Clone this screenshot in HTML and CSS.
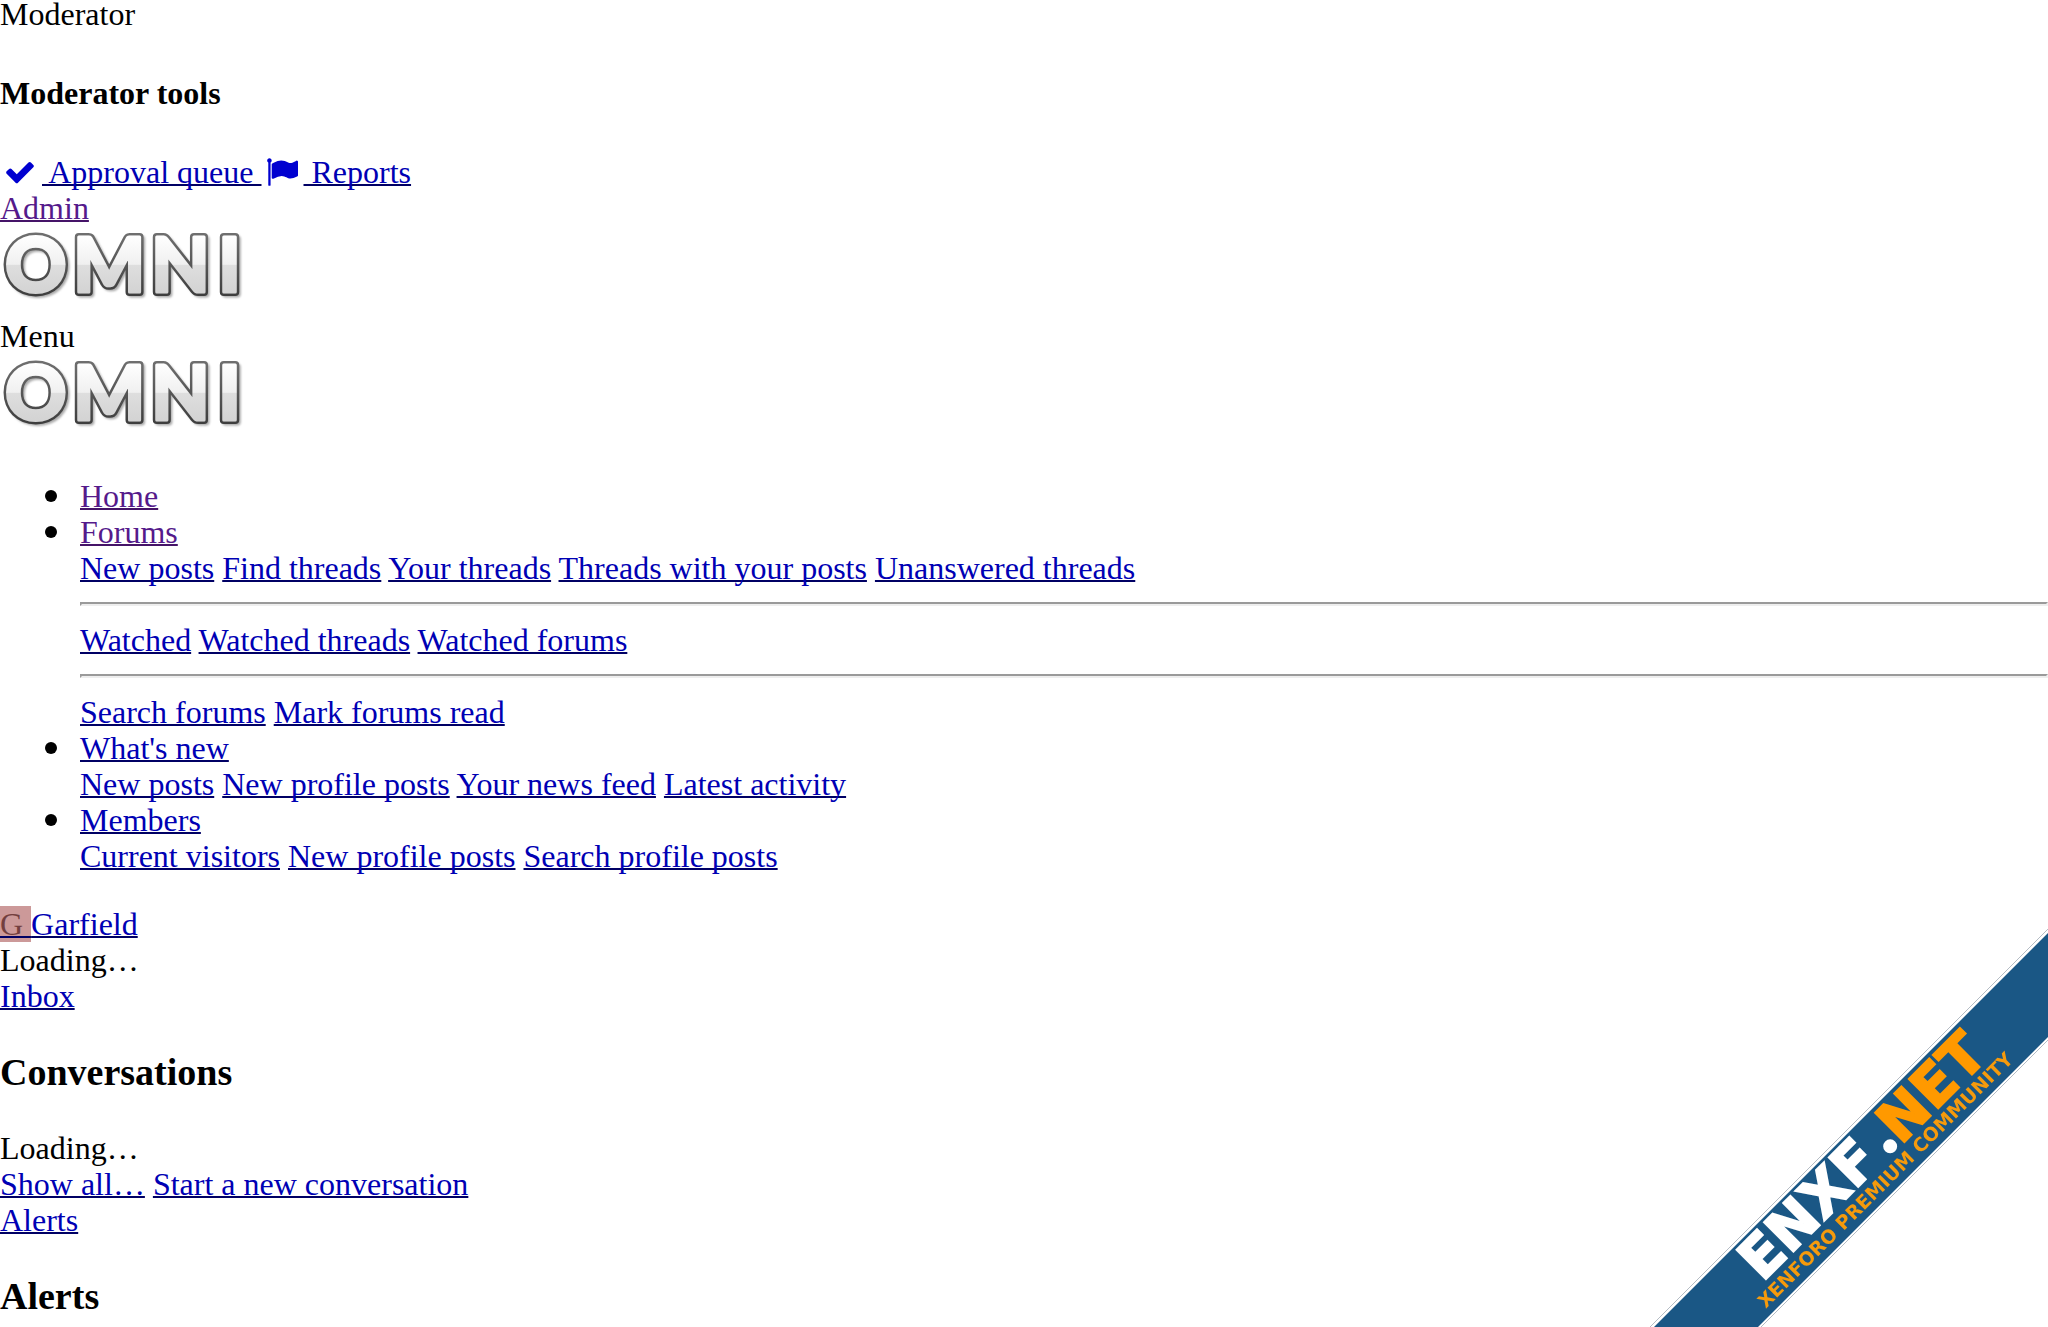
FILE: index.html
```html
<!DOCTYPE html>
<html lang="en">
    <head>
        <meta charset="utf-8">
        <link rel="stylesheet" href="styles.css">
        <title>Omni</title>
    </head>
    <body>

        <!-- shared logo artwork -->
        <svg class="sprite" width="0" height="0" aria-hidden="true">
            <defs>
                <linearGradient id="metal" gradientUnits="userSpaceOnUse" x1="0" y1="9" x2="0" y2="70">
                    <stop offset="0" stop-color="#ffffff"/>
                    <stop offset="0.48" stop-color="#f0f0f0"/>
                    <stop offset="0.5" stop-color="#dedede"/>
                    <stop offset="1" stop-color="#d2d2d2"/>
                </linearGradient>
                <linearGradient id="edge" gradientUnits="userSpaceOnUse" x1="0" y1="6" x2="0" y2="72">
                    <stop offset="0" stop-color="#707070"/>
                    <stop offset="1" stop-color="#3c3c3c"/>
                </linearGradient>
                <symbol id="omni" viewBox="0 0 250 92">
                    <text class="logo-text logo-shadow" x="7 75 153 220" y="68">OMNI</text>
                    <text class="logo-text logo-edge" x="5 73 151 218" y="66">OMNI</text>
                    <text class="logo-text logo-face" x="5 73 151 218" y="66">OMNI</text>
                </symbol>
            </defs>
        </svg>

        <div class="staff-bar">
            <div>Moderator</div>
            <h4>Moderator tools</h4>
            <div>
                <a href="#queue"><span class="icon"><svg viewBox="0 0 1792 1792" aria-hidden="true"><path d="M1671 566q0 40-28 68l-724 724-136 136q-28 28-68 28t-68-28l-136-136-362-362q-28-28-28-68t28-68l136-136q28-28 68-28t68 28l294 295 656-657q28-28 68-28t68 28l136 136q28 28 28 68z"/></svg></span> Approval queue </a><a href="#reports"><span class="icon"><svg viewBox="0 0 1792 1792" aria-hidden="true"><path d="M320 256q0 72-64 110v1266q0 13-9.500 22.500t-22.500 9.500h-64q-13 0-22.500-9.500t-9.500-22.500v-1266q-64-38-64-110 0-53 37.500-90.500t90.500-37.500 90.500 37.500 37.500 90.500zm1472 64v763q0 25-12.500 38.500t-39.500 27.500q-215 116-369 116-61 0-123.500-22t-108.500-48-115.500-48-142.500-22q-192 0-464 146-17 9-33 9-26 0-45-19t-19-45v-742q0-32 31-55 21-14 79-43 236-120 421-120 107 0 200 29t219 88q38 19 88 19 54 0 117.500-21t110-47 88-47 54.500-21q26 0 45 19t19 45z"/></svg></span> Reports</a>
            </div>
            <div><a class="visited" href="#admin">Admin</a></div>
        </div>

        <a class="logo" href="#home" aria-label="Omni"><svg><use href="#omni"/></svg></a>
        <div>Menu</div>
        <a class="logo" href="#home" aria-label="Omni"><svg><use href="#omni"/></svg></a>

        <ul class="nav-list">
            <li><a class="visited" href="#home">Home</a></li>
            <li>
                <a class="visited" href="#forums">Forums</a>
                <div>
                    <a href="#new-posts">New posts</a>
                    <a href="#find-threads">Find threads</a>
                    <a href="#your-threads">Your threads</a>
                    <a href="#contributed">Threads with your posts</a>
                    <a href="#unanswered">Unanswered threads</a>
                    <hr>
                    <a href="#watched">Watched</a>
                    <a href="#watched-threads">Watched threads</a>
                    <a href="#watched-forums">Watched forums</a>
                    <hr>
                    <a href="#search-forums">Search forums</a>
                    <a href="#mark-read">Mark forums read</a>
                </div>
            </li>
            <li>
                <a href="#whats-new">What's new</a>
                <div>
                    <a href="#new-posts">New posts</a>
                    <a href="#profile-posts">New profile posts</a>
                    <a href="#news-feed">Your news feed</a>
                    <a href="#activity">Latest activity</a>
                </div>
            </li>
            <li>
                <a href="#members">Members</a>
                <div>
                    <a href="#visitors">Current visitors</a>
                    <a href="#profile-posts">New profile posts</a>
                    <a href="#search-profile-posts">Search profile posts</a>
                </div>
            </li>
        </ul>

        <div class="account">
            <div><a href="#account"><span class="avatar">G </span>Garfield</a></div>
            <div>Loading…</div>
            <div><a href="#inbox">Inbox</a></div>
            <h3>Conversations</h3>
            <div>Loading…</div>
            <div>
                <a href="#conversations">Show all…</a>
                <a href="#new-conversation">Start a new conversation</a>
            </div>
            <div><a href="#alerts">Alerts</a></div>
            <h3>Alerts</h3>
        </div>

        <!-- corner ribbon -->
        <svg class="ribbon" viewBox="0 0 408 407" role="img" aria-label="ENXF.NET Xenforo premium community">
            <path class="ribbon-band" d="M408 13L14 407H118L408 117z"/>
            <path class="ribbon-edge" d="M408 9L10 407M408 120L121 407"/>
            <g transform="translate(125 360) rotate(-45)">
                <text class="ribbon-name" x="-4" y="0">ENXF</text>
                <circle cx="183" cy="-6" r="7" fill="#ffffff"/>
                <text class="ribbon-name ribbon-net" x="191" y="1">NET</text>
                <text class="ribbon-tagline" x="-20" y="21">XENFORO PREMIUM COMMUNITY</text>
            </g>
        </svg>

    </body>
</html>
```
FILE: styles.css
```css
body {
    margin: -4px 0 0;
    font-family: "Liberation Serif", "Times New Roman", serif;
    font-size: 32px;
    line-height: 36px;
    color: black;
    background-color: white;
    overflow: hidden;
}

a {
    color: #0000b4;
    text-decoration: underline;
    text-decoration-color: #000064;
    text-decoration-thickness: 2px;
    text-decoration-skip-ink: none;
}

a.visited {
    color: #551a8b;
    text-decoration-color: #451468;
}

h4 {
    margin: 43px 0;
    font-size: 32px;
}

h3 {
    margin: 37px 0;
    font-size: 38px;
    line-height: 42px;
}

hr {
    box-sizing: border-box;
    height: 4px;
    margin: 16px 0;
    border: 2px solid #9a9a9a;
    border-right-color: #eeeeee;
    border-bottom-color: #eeeeee;
}

.sprite {
    position: absolute;
}

.icon {
    display: inline-block;
    width: 42px;
    height: 32px;
    vertical-align: -5px;
}

.icon svg {
    display: block;
    width: 32px;
    height: 32px;
    margin-left: 4px;
    fill: #0000d0;
}

.logo {
    display: block;
    width: 250px;
    height: 92px;
}

.logo svg {
    display: block;
    width: 250px;
    height: 92px;
}

.logo-text {
    font-family: Lato, sans-serif;
    font-size: 76px;
    font-weight: 900;
    stroke-linejoin: round;
}

.logo-shadow {
    fill: #aaaaaa;
    stroke: #aaaaaa;
    stroke-width: 7px;
    filter: blur(1px);
}

.logo-edge {
    fill: url(#edge);
    stroke: url(#edge);
    stroke-width: 8px;
}

.logo-face {
    fill: url(#metal);
    stroke: url(#metal);
    stroke-width: 3px;
}

.nav-list {
    margin: 32px 0;
    padding-left: 80px;
    list-style: none;
}

.nav-list li::before {
    content: "";
    float: left;
    width: 12px;
    height: 12px;
    margin: 12px 23px 0 -35px;
    border-radius: 50%;
    background-color: black;
}

.avatar {
    background-color: #cc9999;
    color: #733f3f;
}

.ribbon {
    position: fixed;
    right: 0;
    bottom: 0;
    width: 408px;
    height: 407px;
}

.ribbon-band {
    fill: #1a5785;
}

.ribbon-edge {
    fill: none;
    stroke: #b4bcc4;
    stroke-width: 1px;
}

.ribbon-name,
.ribbon-tagline {
    font-family: "DejaVu Sans", sans-serif;
    font-weight: bold;
}

.ribbon-name {
    font-size: 57px;
    fill: #ffffff;
    stroke: #ffffff;
    stroke-width: 2px;
}

.ribbon-net {
    fill: #ff9900;
    stroke: #ff9900;
}

.ribbon-tagline {
    font-size: 19px;
    fill: #f59a0c;
}
```
